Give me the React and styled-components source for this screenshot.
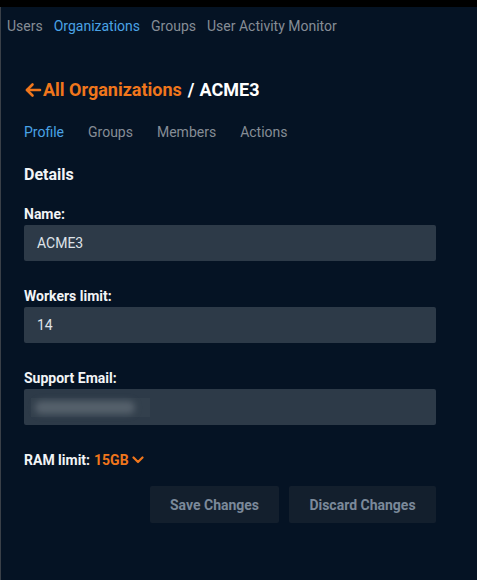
import React from "react";
import styled, { createGlobalStyle } from "styled-components";

const Global = createGlobalStyle`
  html, body { margin: 0; padding: 0; background: #000; }
  body { font-family: Roboto, "Liberation Sans", sans-serif; }
  * { box-sizing: border-box; }
`;

const Page = styled.div`
  margin-top: 7px;
  min-height: 573px;
  background: #051324;
  border-left: 1px solid #3a4048;
`;

const Nav = styled.nav`
  display: flex;
  gap: 11px;
  padding: 9px 0 0 6px;
  font-size: 14px;
  line-height: 20px;
`;

const NavLink = styled.span`
  color: ${(p) => (p.$active ? "#4aa3e6" : "#858d96")};
`;

const Main = styled.main`
  padding: 42px 0 0 23px;
  width: 435px;
  display: flex;
  flex-direction: column;
`;

const Title = styled.h1`
  margin: 0;
  display: flex;
  align-items: center;
  font-size: 18px;
  line-height: 24px;
  font-weight: 700;
  color: #ffffff;
`;

const Back = styled.span`
  display: inline-flex;
  align-items: center;
  color: #f0761c;
  svg { margin-right: 1px; }
`;

const Sep = styled.span`
  margin: 0 5px 0 6px;
`;

const Tabs = styled.div`
  display: flex;
  gap: 24px;
  margin-top: 20px;
  font-size: 14px;
  line-height: 20px;
`;

const Tab = styled.span`
  color: ${(p) => (p.$active ? "#4aa3e6" : "#858d96")};
`;

const Section = styled.h2`
  margin: 22px 0 0;
  font-size: 16px;
  line-height: 22px;
  font-weight: 700;
  color: #f2f4f6;
`;

const Field = styled.div`
  display: flex;
  flex-direction: column;
  gap: 2px;
  margin-top: ${(p) => p.$mt}px;
`;

const Label = styled.label`
  font-size: 14px;
  line-height: 18px;
  font-weight: 700;
  color: #f2f4f6;
`;

const Input = styled.div`
  height: 36px;
  background: #2d3a48;
  border-radius: 2px;
  padding: 0 13px;
  display: flex;
  align-items: center;
  font-size: 14px;
  color: #dfe3e8;
`;

const Redacted = styled.div`
  margin-left: -6px;
  width: 119px;
  height: 19px;
  background: #33404d;
  display: flex;
  align-items: center;
  padding-left: 4px;
`;

const Blur = styled.div`
  width: 100px;
  height: 13px;
  border-radius: 7px;
  background: #55606b;
  filter: blur(3px);
`;

const Ram = styled.div`
  margin-top: 26px;
  display: flex;
  align-items: center;
  font-size: 14px;
  line-height: 18px;
  font-weight: 700;
  color: #f2f4f6;
`;

const RamValue = styled.span`
  margin-left: 4px;
  display: inline-flex;
  align-items: center;
  gap: 3px;
  color: #f0761c;
`;

const Actions = styled.div`
  display: flex;
  justify-content: flex-end;
  gap: 10px;
  margin-top: 17px;
`;

const Button = styled.button`
  height: 37px;
  width: ${(p) => p.$w}px;
  border: none;
  border-radius: 2px;
  background: #131f2d;
  color: #7b899a;
  font-family: Roboto, "Liberation Sans", sans-serif;
  font-size: 14px;
  font-weight: 700;
  padding: 0;
`;

export default function App() {
  return (
    <>
      <Global />
      <Page>
        <Nav>
          <NavLink>Users</NavLink>
          <NavLink $active>Organizations</NavLink>
          <NavLink>Groups</NavLink>
          <NavLink>User Activity Monitor</NavLink>
        </Nav>
        <Main>
          <Title>
            <Back>
              <svg width="18" height="18" viewBox="0 0 18 18" fill="none" stroke="currentColor" strokeWidth="2.6" strokeLinecap="round" strokeLinejoin="round">
                <path d="M16 9H3" />
                <path d="M8.5 3.5L3 9l5.5 5.5" />
              </svg>
              All Organizations
            </Back>
            <Sep>/</Sep>
            ACME3
          </Title>
          <Tabs>
            <Tab $active>Profile</Tab>
            <Tab>Groups</Tab>
            <Tab>Members</Tab>
            <Tab>Actions</Tab>
          </Tabs>
          <Section>Details</Section>
          <Field $mt={19}>
            <Label>Name:</Label>
            <Input>ACME3</Input>
          </Field>
          <Field $mt={26}>
            <Label>Workers limit:</Label>
            <Input>14</Input>
          </Field>
          <Field $mt={26}>
            <Label>Support Email:</Label>
            <Input>
              <Redacted>
                <Blur />
              </Redacted>
            </Input>
          </Field>
          <Ram>
            RAM limit:
            <RamValue>
              15GB
              <svg width="12" height="8" viewBox="0 0 12 8" fill="none" stroke="currentColor" strokeWidth="2.2" strokeLinecap="round" strokeLinejoin="round">
                <path d="M1.5 1.5L6 6l4.5-4.5" />
              </svg>
            </RamValue>
          </Ram>
          <Actions>
            <Button $w={129}>Save Changes</Button>
            <Button $w={147}>Discard Changes</Button>
          </Actions>
        </Main>
      </Page>
    </>
  );
}
